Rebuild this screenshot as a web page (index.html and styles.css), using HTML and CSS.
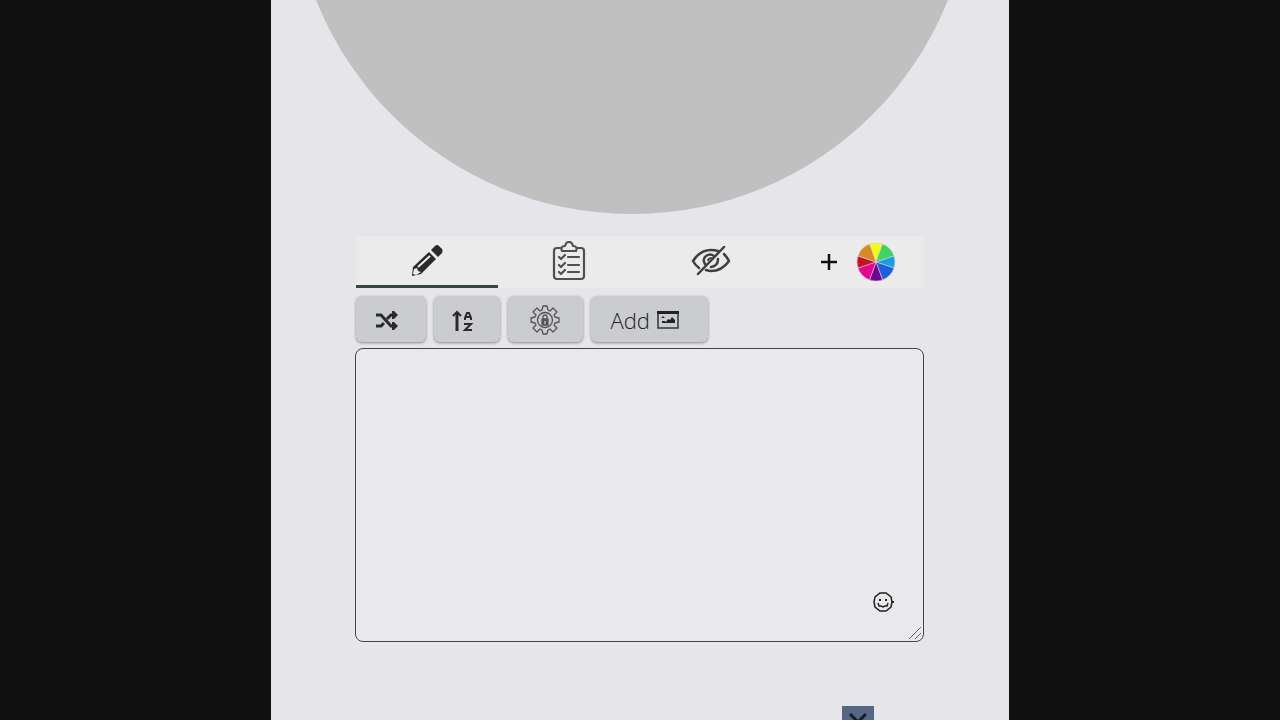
FILE: index.html
```
<!DOCTYPE html>
<html lang="en">
<head>
    <meta charset="UTF-8">
    <meta name="viewport" content="width=device-width, initial-scale=1.0">
    <title>Wheel Editor</title>
    <link rel="stylesheet" href="styles.css">
</head>
<body>
    <main class="panel">
        <div class="wheel-area">
            <div class="wheel"></div>
        </div>

        <div class="editor">
            <nav class="tabs">
                <button class="tab active" type="button" aria-label="Edit entries">
                    <svg width="34" height="34" viewBox="0 0 34 34">
                        <path d="M3 23 L19 8 L26 15 L11 30 L2 32 Z" fill="#2a2a2a"/>
                        <path d="M21 6 L25 2 Q27 0 29 2 L32 5 Q33 7 32 9 L28 13 Z" fill="#2a2a2a"/>
                        <path d="M8 23 L20 12" stroke="#eee" stroke-width="2"/>
                        <path d="M4 25 L7 24 L8 27 L11 28 L6 31 L3 30 Z" fill="#eee"/>
                    </svg>
                </button>
                <button class="tab" type="button" aria-label="Results">
                    <svg width="34" height="40" viewBox="0 0 34 40" fill="none" stroke="#505050" stroke-width="2.2" stroke-linecap="round" stroke-linejoin="round">
                        <path d="M9 7 H5 Q2 7 2 10 V35 Q2 38 5 38 H29 Q32 38 32 35 V10 Q32 7 29 7 H25"/>
                        <path d="M10 10 Q8 5 13 5 Q14 1 17 1 Q20 1 21 5 Q26 5 24 10 Z"/>
                        <path d="M7 16 L9 18 L13 14 M7 24 L9 26 L13 22 M7 31 L9 33 L13 29"/>
                        <path d="M16 16 H27 M16 24 H27 M16 31 H27"/>
                    </svg>
                </button>
                <button class="tab" type="button" aria-label="Hide">
                    <svg width="40" height="32" viewBox="0 0 40 32" fill="none" stroke="#404040" stroke-width="2.5" stroke-linecap="round">
                        <path d="M8 23 Q4 20 2 16 Q9 5 20 5 Q24 5 27 6"/>
                        <path d="M33 9 Q36 12 38 16 Q31 26 20 26 Q18 26 15 25"/>
                        <path d="M14 19 Q11 14 15 11 Q19 8 23 11"/>
                        <path d="M27 14 Q27 21 20 22"/>
                        <path d="M17 15 Q18 13 20 13" stroke-width="2"/>
                        <path d="M7 29 L33 2"/>
                    </svg>
                </button>
                <button class="tab tab-colors" type="button" aria-label="Add colors">
                    <svg width="18" height="18" viewBox="0 0 18 18">
                        <path d="M9 1 V17 M1 9 H17" stroke="#111" stroke-width="2.5"/>
                    </svg>
                    <svg width="40" height="40" viewBox="-20 -20 40 40" stroke="#e8c8d8" stroke-width=".6">
                        <path d="M0 0 L-6.5 -17.9 A19 19 0 0 1 6.5 -17.9 Z" fill="#eeff12"/>
                        <path d="M0 0 L6.5 -17.9 A19 19 0 0 1 18 -6 Z" fill="#3bd662"/>
                        <path d="M0 0 L18 -6 A19 19 0 0 1 18 6 Z" fill="#169fe8"/>
                        <path d="M0 0 L18 6 A19 19 0 0 1 6.5 17.9 Z" fill="#1a62dc"/>
                        <path d="M0 0 L6.5 17.9 A19 19 0 0 1 -6.5 17.9 Z" fill="#6d0596"/>
                        <path d="M0 0 L-6.5 17.9 A19 19 0 0 1 -18 6 Z" fill="#e4058f"/>
                        <path d="M0 0 L-18 6 A19 19 0 0 1 -18 -6 Z" fill="#c5121f"/>
                        <path d="M0 0 L-18 -6 A19 19 0 0 1 -6.5 -17.9 Z" fill="#d98a24"/>
                    </svg>
                </button>
            </nav>

            <div class="tools">
                <button class="tool tool-shuffle" type="button" aria-label="Shuffle">
                    <svg width="24" height="20" viewBox="0 0 24 20">
                        <path d="M1 4 H6 L16 15 H19 M1 15 H6 L9 12 M12 8 L16 4 H19" fill="none" stroke="#2a2a2a" stroke-width="3"/>
                        <path d="M17 0 H19 L23 4 L19 8 H17 Z M17 11 H19 L23 15 L19 19 H17 Z" fill="#2a2a2a"/>
                    </svg>
                </button>
                <button class="tool tool-sort" type="button" aria-label="Sort">
                    <svg width="22" height="22" viewBox="0 0 22 22" fill="none" stroke="#2a2a2a" stroke-width="2">
                        <path d="M5 21 V3" stroke-width="3"/>
                        <path d="M1 6 L5 2 L9 6"/>
                        <path d="M13 10 V8 L15 3 H17 L19 8 V10 M13 7 H19"/>
                        <path d="M12 14 H19 L13 20 H20"/>
                    </svg>
                </button>
                <button class="tool tool-settings" type="button" aria-label="Advanced settings">
                    <svg width="30" height="30" viewBox="-15 -15 30 30" fill="none" stroke="#555" stroke-width="1.3" stroke-linejoin="round">
                        <path d="M-3 -10 L-2 -14 H2 L3 -10 L5 -9 L8 -12 L12 -8 L9 -5 L10 -3 L14 -2 V2 L10 3 L9 5 L12 8 L8 12 L5 9 L3 10 L2 14 H-2 L-3 10 L-5 9 L-8 12 L-12 8 L-9 5 L-10 3 L-14 2 V-2 L-10 -3 L-9 -5 L-12 -8 L-8 -12 L-5 -9 Z"/>
                        <circle r="7.5"/>
                        <path d="M-2 -1 V-3 Q-2 -5 0 -5 Q2 -5 2 -3 V-1"/>
                        <rect x="-3" y="-1" width="6" height="6" fill="#555"/>
                        <path d="M0 1 V4" stroke="#ccc"/>
                    </svg>
                </button>
                <button class="tool tool-add" type="button">
                    Add
                    <svg width="24" height="20" viewBox="0 0 24 20">
                        <path d="M2 2 H22 V18 H2 Z" fill="none" stroke="#333" stroke-width="1.5"/>
                        <path d="M1 1 H23 V4 H1 Z" fill="#222"/>
                        <path d="M6 13 V11 H9 L10 12 L12 9 L14 10 L16 7 L19 10 V13 Z" fill="#222"/>
                        <path d="M5 8 L7 6 L9 8 Z" fill="#333"/>
                    </svg>
                </button>
            </div>

            <div class="entries">
                <textarea class="entries-input" aria-label="Entries"></textarea>
                <button class="emoji" type="button" aria-label="Insert emoji">
                    <svg width="22" height="22" viewBox="0 0 22 22" fill="none" stroke="#222" stroke-width="1.5">
                        <path d="M8 2 H14 L19 6 L20 11 L19 16 L14 20 H8 L3 16 L2 11 L3 6 Z"/>
                        <path d="M8 8 V10 M14 8 V10" stroke-width="2"/>
                        <path d="M6 12 L7 15 H9 L11 16 L13 15 H15 L16 12"/>
                        <path d="M20 11 H22" stroke-width="2"/>
                    </svg>
                </button>
                <svg class="grip" width="14" height="14" viewBox="0 0 14 14">
                    <path d="M1 13 L13 1 M7 13 L13 7" stroke="#666" stroke-width="1"/>
                </svg>
            </div>

            <div class="footer">
                <button class="close" type="button" aria-label="Close">
                    <svg width="18" height="18" viewBox="0 0 18 18">
                        <path d="M1 1 L17 17 M17 1 L1 17" stroke="#1a1c22" stroke-width="3"/>
                    </svg>
                </button>
            </div>
        </div>
    </main>
</body>
</html>
```
FILE: styles.css
```
* {
    box-sizing: border-box;
}
body {
    margin: 0;
    height: 100vh;
    overflow: hidden;
    background-color: #101010;
    font-family: "Open Sans", "Noto Sans", sans-serif;
}
button {
    border: none;
    padding: 0;
    cursor: pointer;
}
svg {
    display: block;
}
.panel {
    width: 57.7%;
    min-height: 100vh;
    margin: 0 auto;
    background-color: #e6e6ea;
}
.wheel-area {
    display: flex;
    align-items: flex-end;
    justify-content: center;
    height: 214px;
    padding-right: 16px;
    overflow: hidden;
}
.wheel {
    flex: none;
    width: 94%;
    aspect-ratio: 1;
    border-radius: 50%;
    background-color: #c0c0c0;
}
.editor {
    padding: 22px 85px 0 84px;
}
.tabs {
    display: grid;
    grid-template-columns: repeat(4, 1fr);
    height: 52px;
    margin-left: 1px;
    background-color: #ebebeb;
}
.tab {
    display: flex;
    align-items: center;
    justify-content: center;
    background: none;
    border-bottom: 3px solid transparent;
}
.tab.active {
    border-bottom-color: #34483f;
}
.tab-colors {
    gap: 18px;
    padding: 3px 0 0 10px;
}
.tools {
    display: flex;
    gap: 8px;
    margin: 8px 0 6px 1px;
}
.tool {
    display: flex;
    align-items: center;
    justify-content: center;
    width: 70px;
    height: 46px;
    border-radius: 6px;
    background-color: #cbccd0;
    box-shadow: 0 1px 3px rgba(0, 0, 0, 0.4);
    color: #222;
    font-family: inherit;
    font-size: 22px;
    font-weight: 300;
}
.tool-shuffle {
    padding: 4px 8px 0 0;
}
.tool-sort {
    width: 66px;
    padding: 4px 8px 0 0;
}
.tool-settings {
    width: 75px;
    padding-top: 2px;
}
.tool-add {
    width: 117px;
    gap: 6px;
    padding: 2px 8px 0 0;
}
.entries {
    position: relative;
}
.entries-input {
    display: block;
    width: 100%;
    height: 294px;
    padding: 12px;
    border: 1px solid #444;
    border-radius: 8px;
    background-color: #e9e9eb;
    font-family: inherit;
    font-size: 22px;
    resize: none;
}
.emoji {
    position: absolute;
    right: 30px;
    bottom: 29px;
    background: none;
}
.grip {
    position: absolute;
    right: 2px;
    bottom: 2px;
    pointer-events: none;
}
.footer {
    display: flex;
    justify-content: flex-end;
    padding: 64px 50px 0;
}
.close {
    display: flex;
    align-items: center;
    justify-content: center;
    width: 32px;
    height: 32px;
    background-color: #566685;
}
```
